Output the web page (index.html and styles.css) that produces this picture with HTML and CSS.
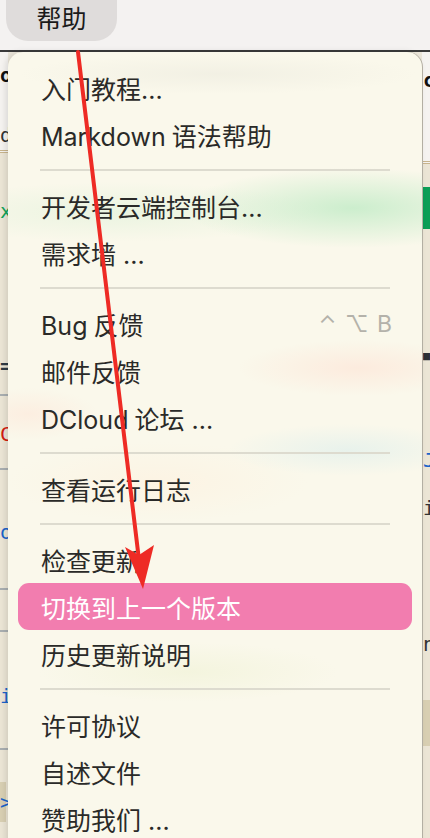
FILE: index.html
```html
<!DOCTYPE html>
<html lang="zh-CN">
<head>
    <meta charset="UTF-8">
    <meta name="viewport" content="width=device-width, initial-scale=1.0">
    <link rel="stylesheet" href="styles.css">
    <title>帮助菜单</title>
</head>
<body>
    <div class="menubar">
        <span class="menubar-item">帮助</span>
    </div>

    <div class="workspace">
        <!-- editor behind the menu, left side -->
        <div class="edge edge-left">
            <div class="edge-top">
                <span class="g g-o">o</span>
                <span class="g g-d">d</span>
            </div>
            <div class="edge-body">
                <span class="g g-x">x</span>
                <span class="g g-eq">=</span>
                <span class="rule rule-1"></span>
                <span class="g g-c">C</span>
                <span class="rule rule-2"></span>
                <span class="g g-blue-o">o</span>
                <span class="rule rule-3"></span>
                <span class="rule rule-4"></span>
                <span class="g g-i">i</span>
                <span class="rule rule-5"></span>
                <span class="g g-gt">&gt;</span>
            </div>
        </div>

        <div class="menu">
            <div class="menu-item"><span class="label">入门教程...</span></div>
            <div class="menu-item"><span class="label">Markdown<span class="cjk-gap"></span>语法帮助</span></div>
            <div class="menu-sep"></div>
            <div class="menu-item"><span class="label">开发者云端控制台...</span></div>
            <div class="menu-item"><span class="label">需求墙 ...</span></div>
            <div class="menu-sep"></div>
            <div class="menu-item"><span class="label">Bug<span class="cjk-gap"></span>反馈</span><span class="shortcut">⌃ ⌥ B</span></div>
            <div class="menu-item"><span class="label">邮件反馈</span></div>
            <div class="menu-item"><span class="label">DCloud<span class="cjk-gap"></span>论坛 ...</span></div>
            <div class="menu-sep"></div>
            <div class="menu-item"><span class="label">查看运行日志</span></div>
            <div class="menu-sep"></div>
            <div class="menu-item"><span class="label">检查更新</span></div>
            <div class="menu-item active"><span class="label">切换到上一个版本</span></div>
            <div class="menu-item"><span class="label">历史更新说明</span></div>
            <div class="menu-sep"></div>
            <div class="menu-item"><span class="label">许可协议</span></div>
            <div class="menu-item"><span class="label">自述文件</span></div>
            <div class="menu-item"><span class="label">赞助我们 ...</span></div>
        </div>

        <!-- editor behind the menu, right side -->
        <div class="edge edge-right">
            <div class="edge-top">
                <span class="g g-rc">c</span>
            </div>
            <div class="edge-body">
                <span class="green-bar"></span>
                <span class="g g-sq">■</span>
                <span class="g g-j">J</span>
                <span class="g g-ri">i</span>
                <span class="g g-n">n</span>
                <span class="tan-block"></span>
            </div>
        </div>
    </div>

    <!-- markup arrow drawn on top of the screenshot -->
    <svg class="annotation" width="430" height="838" viewBox="0 0 430 838">
        <line x1="78" y1="52" x2="139" y2="560" stroke="#ee2b25" stroke-width="4" stroke-linecap="round"/>
        <polygon points="143,589 125,547 139,555 154,545" fill="#ee2b25"/>
    </svg>
</body>
</html>
```

FILE: styles.css
```css
* {
    box-sizing: border-box;
}

body {
    margin: 0;
    width: 430px;
    height: 838px;
    overflow: hidden;
    background: #ece7da;
    font-family: Inter, "Noto Sans CJK SC", sans-serif;
    color: #2a2a28;
}

.menubar {
    height: 52px;
    background: #f4f2f1;
    border-bottom: 2px solid #3a3a3a;
    padding-left: 6px;
}

.menubar-item {
    display: inline-flex;
    align-items: center;
    justify-content: center;
    width: 111px;
    height: 51px;
    margin-top: -10px;
    padding-top: 3px;
    border-radius: 0 0 22px 22px;
    background: #dfdcdb;
    font-size: 25px;
    color: #1a1a1a;
}

.workspace {
    display: grid;
    grid-template-columns: 8px 414px 8px;
    height: 786px;
}

/* side strips of the editor */
.edge {
    display: flex;
    flex-direction: column;
    overflow: hidden;
}

.edge-top {
    display: flex;
    flex-direction: column;
    background: #f5f3f0;
    border-bottom: 3px double #c8b48c;
}

.edge-left .edge-top {
    height: 101px;
}

.edge-right .edge-top {
    height: 112px;
}

.edge-body {
    flex: 1;
    display: flex;
    flex-direction: column;
    background: #ebe5d5;
}

.g {
    display: block;
    height: 24px;
    line-height: 24px;
    font-family: "DejaVu Sans Mono", monospace;
    font-size: 20px;
}

.edge-left .g {
    text-align: right;
    margin-right: 2px;
}

.edge-right .g {
    margin-left: 1px;
}

.g-o { margin-top: 11px; font-weight: bold; color: #111; }
.g-d { margin-top: 36px; color: #333; }
.g-x { margin-top: 46px; color: #12a35a; }
.g-eq { margin-top: 131px; color: #2e3a44; font-weight: bold; }
.g-c { margin-top: 26px; color: #d21b10; }
.g-blue-o { margin-top: 50px; color: #1a63c9; }
.g-i { margin-top: 52px; color: #1a63c9; }
.g-gt { margin-top: 32px; color: #1a63c9; background: #d8cfb2; height: 40px; line-height: 40px; }

.rule {
    display: block;
    height: 2px;
    background: #a9aeb0;
}

.rule-1 { margin-top: 16px; }
.rule-2 { margin-top: 22px; }
.rule-3 { margin-top: 44px; }
.rule-4 { margin-top: 40px; }
.rule-5 { margin-top: 40px; }

.g-rc { margin-top: 16px; font-weight: bold; color: #111; }
.green-bar { display: block; height: 42px; margin-top: 23px; background: #0b9e56; }
.g-sq { margin-top: 115px; color: #2c3036; font-size: 12px; }
.g-j { margin-top: 80px; color: #1a63c9; }
.g-ri { margin-top: 24px; color: #333; }
.g-n { margin-top: 112px; color: #333; }
.tan-block { display: block; height: 46px; margin-top: 44px; background: #d8cfb2; }

/* the help menu */
.menu {
    position: relative;
    z-index: 1;
    padding: 12px 10px;
    border-radius: 15px 15px 0 0;
    background:
        radial-gradient(ellipse 170px 40px at 345px 156px, rgba(188, 234, 195, 0.75), rgba(188, 234, 195, 0) 100%),
        radial-gradient(ellipse 200px 30px at 110px 160px, rgba(210, 238, 208, 0.4), rgba(210, 238, 208, 0) 100%),
        radial-gradient(ellipse 200px 20px at 210px 22px, rgba(205, 205, 195, 0.18), rgba(205, 205, 195, 0) 100%),
        radial-gradient(ellipse 120px 28px at 350px 316px, rgba(255, 222, 208, 0.5), rgba(255, 222, 208, 0) 100%),
        radial-gradient(ellipse 70px 26px at 20px 362px, rgba(255, 226, 212, 0.45), rgba(255, 226, 212, 0) 100%),
        radial-gradient(ellipse 120px 26px at 340px 398px, rgba(220, 238, 236, 0.6), rgba(220, 238, 236, 0) 100%),
        radial-gradient(ellipse 150px 40px at 150px 430px, rgba(255, 238, 218, 0.45), rgba(255, 238, 218, 0) 100%),
        radial-gradient(ellipse 150px 30px at 180px 620px, rgba(236, 240, 206, 0.45), rgba(236, 240, 206, 0) 100%),
        #faf8eb;
    box-shadow: -2px 0 6px rgba(0, 0, 0, 0.12), 1px 0 0 #b9b4a8;
}

.menu-item {
    display: flex;
    align-items: center;
    justify-content: space-between;
    height: 47px;
    padding: 0 19px 0 23px;
    border-radius: 11px;
    font-size: 25px;
    color: #2a2a28;
    white-space: nowrap;
}

.cjk-gap {
    display: inline-block;
    width: 6px;
}

.menu-item.active {
    background: #f27daf;
    color: #fff;
}

.shortcut {
    color: #b4b2aa;
    font-size: 23px;
    letter-spacing: 1px;
}

.menu-sep {
    height: 2px;
    margin: 11px 22px 11px 22px;
    background: #dddbcf;
}

.annotation {
    position: absolute;
    left: 0;
    top: 0;
    z-index: 2;
    pointer-events: none;
}
```
